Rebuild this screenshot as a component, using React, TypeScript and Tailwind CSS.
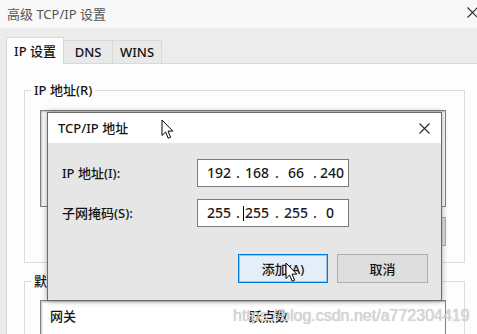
import React from "react";

const Cursor = ({ className }: { className: string }) => (
  <svg className={className} width="13" height="21" viewBox="0 0 13 21">
    <path
      d="M1 1 L1 16.5 L4.6 13 L7.2 19.2 L9.6 18.2 L7 12.1 L11.8 12.1 Z"
      fill="#ffffff"
      stroke="#000000"
      strokeWidth="1"
      strokeLinejoin="miter"
    />
  </svg>
);

const Close = ({ className }: { className: string }) => (
  <svg className={className} width="11" height="11" viewBox="0 0 11 11">
    <path d="M0.5 0.5 L10.5 10.5 M10.5 0.5 L0.5 10.5" stroke="#2a2a2a" strokeWidth="1.1" />
  </svg>
);

const IpField = ({ parts }: { parts: string[] }) => (
  <div className="flex items-center w-[152px] h-[28px] border border-[#7a7a7a] bg-white pl-[6px] text-[14px] text-[#1a1a1a]">
    <span className="w-[30px] text-center">{parts[0]}</span>
    <span className="w-[8px] text-center">.</span>
    <span className="w-[30px] text-center">{parts[1]}</span>
    <span className="w-[10px] text-center">.</span>
    <span className="w-[28px] text-center">{parts[2]}</span>
    <span className="w-[10px] text-center">.</span>
    <span className="w-[20px] text-center">{parts[3]}</span>
  </div>
);

export default function App() {
  return (
    <div className="relative w-[477px] h-[334px] overflow-hidden bg-[#ececec] text-[#141414] font-medium font-['Noto_Sans','Noto_Sans_CJK_SC',sans-serif] text-[13px] leading-[16px]">
      {/* window title bar */}
      <div className="h-[28px] bg-[#f8f8f8] flex items-center justify-between pl-[7px]">
        <span className="text-[#555] text-[13px] font-normal">高级 TCP/IP 设置</span>
        <Close className="-mt-[4px] translate-x-[1px]" />
      </div>

      {/* tabs */}
      <div className="pl-[6px]">
        <div className="flex items-end h-[35px]">
          <div className="relative z-10 -mb-px w-[58px] h-[27px] bg-[#fdfdfd] border border-b-0 border-[#d9d9d9] flex items-center justify-center">
            IP 设置
          </div>
          <div className="w-[49px] h-[23px] bg-[#e9e9e9] border border-l-0 border-b-0 border-[#d9d9d9] flex items-center justify-center">
            DNS
          </div>
          <div className="w-[49px] h-[23px] bg-[#e9e9e9] border border-l-0 border-b-0 border-[#d9d9d9] flex items-center justify-center">
            WINS
          </div>
        </div>

        {/* panel */}
        <div className="h-[271px] bg-[#fdfdfd] border-l border-t border-[#d9d9d9] pl-[17px] pt-[18px]">
          <fieldset className="w-[441px] h-[181px] border border-[#dcdcdc]">
            <legend className="ml-[6px] px-[3px] leading-[16px]">IP 地址(R)</legend>
            <div className="ml-[15px] mt-[12px] w-[406px] h-[97px] bg-white border border-[#828282] shadow-[inset_1px_1px_2px_rgba(0,0,0,0.25)]" />
            <div className="ml-[15px] mt-[10px] w-[406px] flex justify-end gap-[8px]">
              <div className="w-[90px] h-[29px] bg-[#e1e1e1] border border-[#adadad] flex items-center justify-center">添加(A)...</div>
              <div className="w-[90px] h-[29px] bg-[#e1e1e1] border border-[#adadad] flex items-center justify-center">编辑(T)...</div>
              <div className="w-[90px] h-[29px] bg-[#e1e1e1] border border-[#adadad] flex items-center justify-center">删除(V)</div>
            </div>
          </fieldset>

          <fieldset className="mt-[10px] w-[441px] h-[120px] border border-[#dcdcdc]">
            <legend className="ml-[6px] px-[3px] leading-[16px]">默认网关(F):</legend>
            <div className="ml-[15px] mt-[11px] w-[406px] h-[80px] bg-white border border-[#828282] shadow-[inset_1px_1px_2px_rgba(0,0,0,0.25)]">
              <div className="flex items-center h-[30px] pl-[9px]">
                <span className="w-[199px]">网关</span>
                <span>跃点数</span>
              </div>
            </div>
          </fieldset>
        </div>
      </div>

      {/* TCP/IP address dialog */}
      <div className="absolute left-[47px] top-[112px] w-[395px] h-[189px] border border-[#6a6a6a] bg-[#e6e6e6] shadow-[0_0_6px_rgba(0,0,0,0.35)] flex flex-col">
        <div className="h-[30px] bg-white flex items-center justify-between pl-[10px] pr-[11px]">
          <span>TCP/IP 地址</span>
          <Close className="" />
        </div>
        <div className="flex flex-col pl-[14px] pt-[16px] pr-[13px]">
          <div className="flex items-center">
            <span className="w-[135px]">IP 地址(I):</span>
            <IpField parts={["192", "168", "66", "240"]} />
          </div>
          <div className="flex items-center mt-[12px]">
            <span className="w-[135px]">子网掩码(S):</span>
            <div className="relative">
              <IpField parts={["255", "255", "255", "0"]} />
              <div className="absolute left-[46px] top-[7px] w-px h-[15px] bg-black" />
            </div>
          </div>
          <div className="flex justify-end gap-[9px] mt-[27px]">
            <div className="w-[90px] h-[29px] bg-[#e3eef8] border border-[#0078d7] shadow-[inset_0_0_0_1px_#9cc6ea] flex items-center justify-center">
              添加(A)
            </div>
            <div className="w-[91px] h-[29px] bg-[#dedede] border border-[#adadad] flex items-center justify-center">
              取消
            </div>
          </div>
        </div>
      </div>

      {/* watermark */}
      <div className="absolute left-[233px] top-[306px] text-[16px] leading-[20px] font-normal font-['Liberation_Sans',sans-serif] text-[#d6d6d6] [text-shadow:0_0_1px_rgba(120,120,120,0.5)]">
        https://blog.csdn.net/a772304419
      </div>

      {/* mouse cursors */}
      <Cursor className="absolute left-[161px] top-[119px]" />
      <Cursor className="absolute left-[285px] top-[262px]" />
    </div>
  );
}
